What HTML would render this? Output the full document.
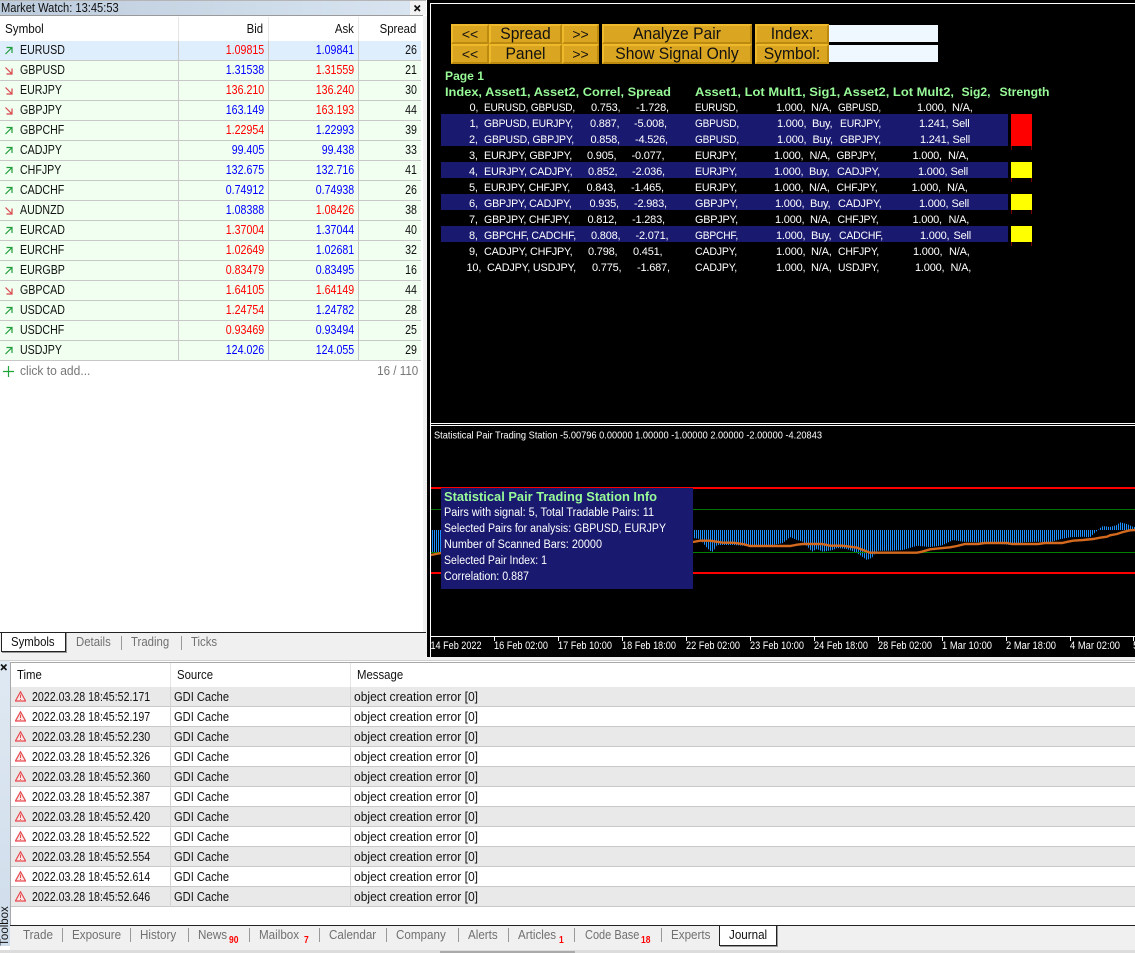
<!DOCTYPE html>
<html><head><meta charset="utf-8"><style>
html,body{margin:0;padding:0;background:#fff;width:1135px;height:953px;overflow:hidden}
body{position:relative;font-family:"Liberation Sans",sans-serif;font-size:12.5px;color:#111}
.a{position:absolute}
.t{position:absolute;white-space:nowrap;line-height:16px;transform:scaleX(.85);transform-origin:0 50%}
.tr{position:absolute;white-space:nowrap;line-height:16px;transform:scaleX(.85);transform-origin:100% 50%;text-align:right}
.hd{transform:scaleX(.91)}
.gd{transform:scaleX(.89)}
.ms{transform:scaleX(.965)}
.row{position:absolute;left:0;width:421px;height:19px;background:#f0fff0;border-bottom:1px solid #c8c8c8}
.row .t,.row .tr{top:1px}
.row i{position:absolute;top:0;width:1px;height:20px;background:#c8c8c8}
.ar{position:absolute;left:4px;top:5px}
.s{left:20px}.b{right:157px}.k{right:67px}.p{right:4px}
.R{color:#f00}.B{color:#00f}
.jr{position:absolute;left:11px;width:1124px;height:19px;border-bottom:1px solid #c8c8c8}
.jr .t{top:2px}
.jr i{position:absolute;top:0;width:1px;height:20px;background:#d4d4d4}
.g{background:#e9e9e9}
.btn{position:absolute;box-sizing:border-box;height:20px;background:#daa520;border:2px solid;border-color:#efb92c #bd8a10 #bd8a10 #efb92c;text-align:center;font-size:17px;line-height:16px;color:#111;white-space:nowrap}
.btn span{display:block;transform:scaleX(.92)}
.sm{font-size:14px;line-height:16px}
.sm span{transform:none}
.tab{position:absolute;top:927px;color:#707070;white-space:nowrap;line-height:16px;transform:scaleX(.93);transform-origin:0 50%}
.sep{position:absolute;top:928px;width:1px;height:14px;background:#999}
.n{position:absolute;top:935px;color:#f00;font-size:10px;font-weight:bold;line-height:12px;transform:scaleX(.85);transform-origin:0 50%}
.st{position:absolute;top:634px;color:#707070;line-height:16px;transform:scaleX(.91);transform-origin:0 50%}
svg text{font-family:"Liberation Sans",sans-serif}
</style></head><body>
<svg width="0" height="0" style="position:absolute"><defs>
<g id="up"><path d="M1.5 8L7.5 2M2.5 1.5H8V7" fill="none" stroke="#1f9e3a" stroke-width="1.2"/></g>
<g id="dn"><path d="M1.5 1.5L7.5 7.5M2.5 8H8V2.5" fill="none" stroke="#d9434a" stroke-width="1.2"/></g>
<g id="w"><path d="M5.5 .8L10.6 10H.4Z" fill="#fde4e4" stroke="#e64a4f" stroke-width="1.2"/><path d="M5.5 3.6V7M5.5 8V9" stroke="#e64a4f" stroke-width="1"/></g>
</defs></svg>

<!-- Market watch -->
<div class="a" style="left:0;top:0;width:426px;height:1px;background:#b5b5b5"></div>
<div class="a" style="left:0;top:1px;width:410px;height:14px;background:linear-gradient(90deg,#bccbdc,#d8e4f0)"></div>
<div class="a" style="left:410px;top:1px;width:16px;height:14px;background:#f2f2f2"></div>
<div class="a" style="left:0;top:15px;width:423px;height:1px;background:#9a9a9a"></div>
<div class="t" style="left:1px;top:0;transform:scaleX(.89)">Market Watch: 13:45:53</div>
<svg class="a" style="left:413px;top:4px" width="9" height="9"><path d="M1.5 1.5L7 7M7 1.5L1.5 7" stroke="#111" stroke-width="1.6"/></svg>
<div class="a" style="left:423px;top:16px;width:4px;height:640px;background:#f0f0f0"></div>
<div class="a" style="left:178px;top:17px;width:1px;height:24px;background:#e6e6e6"></div>
<div class="a" style="left:268px;top:17px;width:1px;height:24px;background:#e6e6e6"></div>
<div class="a" style="left:358px;top:17px;width:1px;height:24px;background:#e6e6e6"></div>
<div class="t hd" style="left:5px;top:21px;transform:scaleX(.93)">Symbol</div>
<div class="tr hd" style="right:872px;top:21px">Bid</div>
<div class="tr hd" style="right:781px;top:21px">Ask</div>
<div class="tr hd" style="right:719px;top:21px">Spread</div>

<div class="row" style="top:41px;background:#deeefc"><i style="left:178px"></i><i style="left:268px"></i><i style="left:358px"></i><svg class="ar" width="10" height="10"><use href="#up"/></svg><div class="t s">EURUSD</div><div class="tr b R">1.09815</div><div class="tr k B">1.09841</div><div class="tr p">26</div></div>
<div class="row" style="top:61px"><i style="left:178px"></i><i style="left:268px"></i><i style="left:358px"></i><svg class="ar" width="10" height="10"><use href="#dn"/></svg><div class="t s">GBPUSD</div><div class="tr b B">1.31538</div><div class="tr k R">1.31559</div><div class="tr p">21</div></div>
<div class="row" style="top:81px"><i style="left:178px"></i><i style="left:268px"></i><i style="left:358px"></i><svg class="ar" width="10" height="10"><use href="#dn"/></svg><div class="t s">EURJPY</div><div class="tr b R">136.210</div><div class="tr k R">136.240</div><div class="tr p">30</div></div>
<div class="row" style="top:101px"><i style="left:178px"></i><i style="left:268px"></i><i style="left:358px"></i><svg class="ar" width="10" height="10"><use href="#dn"/></svg><div class="t s">GBPJPY</div><div class="tr b B">163.149</div><div class="tr k R">163.193</div><div class="tr p">44</div></div>
<div class="row" style="top:121px"><i style="left:178px"></i><i style="left:268px"></i><i style="left:358px"></i><svg class="ar" width="10" height="10"><use href="#up"/></svg><div class="t s">GBPCHF</div><div class="tr b R">1.22954</div><div class="tr k B">1.22993</div><div class="tr p">39</div></div>
<div class="row" style="top:141px"><i style="left:178px"></i><i style="left:268px"></i><i style="left:358px"></i><svg class="ar" width="10" height="10"><use href="#up"/></svg><div class="t s">CADJPY</div><div class="tr b B">99.405</div><div class="tr k B">99.438</div><div class="tr p">33</div></div>
<div class="row" style="top:161px"><i style="left:178px"></i><i style="left:268px"></i><i style="left:358px"></i><svg class="ar" width="10" height="10"><use href="#up"/></svg><div class="t s">CHFJPY</div><div class="tr b B">132.675</div><div class="tr k B">132.716</div><div class="tr p">41</div></div>
<div class="row" style="top:181px"><i style="left:178px"></i><i style="left:268px"></i><i style="left:358px"></i><svg class="ar" width="10" height="10"><use href="#up"/></svg><div class="t s">CADCHF</div><div class="tr b B">0.74912</div><div class="tr k B">0.74938</div><div class="tr p">26</div></div>
<div class="row" style="top:201px"><i style="left:178px"></i><i style="left:268px"></i><i style="left:358px"></i><svg class="ar" width="10" height="10"><use href="#dn"/></svg><div class="t s">AUDNZD</div><div class="tr b B">1.08388</div><div class="tr k R">1.08426</div><div class="tr p">38</div></div>
<div class="row" style="top:221px"><i style="left:178px"></i><i style="left:268px"></i><i style="left:358px"></i><svg class="ar" width="10" height="10"><use href="#up"/></svg><div class="t s">EURCAD</div><div class="tr b R">1.37004</div><div class="tr k B">1.37044</div><div class="tr p">40</div></div>
<div class="row" style="top:241px"><i style="left:178px"></i><i style="left:268px"></i><i style="left:358px"></i><svg class="ar" width="10" height="10"><use href="#up"/></svg><div class="t s">EURCHF</div><div class="tr b R">1.02649</div><div class="tr k B">1.02681</div><div class="tr p">32</div></div>
<div class="row" style="top:261px"><i style="left:178px"></i><i style="left:268px"></i><i style="left:358px"></i><svg class="ar" width="10" height="10"><use href="#up"/></svg><div class="t s">EURGBP</div><div class="tr b R">0.83479</div><div class="tr k B">0.83495</div><div class="tr p">16</div></div>
<div class="row" style="top:281px"><i style="left:178px"></i><i style="left:268px"></i><i style="left:358px"></i><svg class="ar" width="10" height="10"><use href="#dn"/></svg><div class="t s">GBPCAD</div><div class="tr b R">1.64105</div><div class="tr k R">1.64149</div><div class="tr p">44</div></div>
<div class="row" style="top:301px"><i style="left:178px"></i><i style="left:268px"></i><i style="left:358px"></i><svg class="ar" width="10" height="10"><use href="#up"/></svg><div class="t s">USDCAD</div><div class="tr b R">1.24754</div><div class="tr k B">1.24782</div><div class="tr p">28</div></div>
<div class="row" style="top:321px"><i style="left:178px"></i><i style="left:268px"></i><i style="left:358px"></i><svg class="ar" width="10" height="10"><use href="#up"/></svg><div class="t s">USDCHF</div><div class="tr b R">0.93469</div><div class="tr k B">0.93494</div><div class="tr p">25</div></div>
<div class="row" style="top:341px"><i style="left:178px"></i><i style="left:268px"></i><i style="left:358px"></i><svg class="ar" width="10" height="10"><use href="#up"/></svg><div class="t s">USDJPY</div><div class="tr b B">124.026</div><div class="tr k B">124.055</div><div class="tr p">29</div></div>

<svg class="a" style="left:3px;top:365px" width="12" height="12"><path d="M5.5 1V12M0 6.5H11" stroke="#1fa53a" stroke-width="1.2"/></svg>
<div class="t ms" style="left:20px;top:363px;color:#777">click to add...</div>
<div class="tr" style="right:717px;top:363px;color:#777;transform:scaleX(.93)">16 / 110</div>

<!-- left tabs -->
<div class="a" style="left:0;top:632px;width:426px;height:26px;background:#f0f0f0"></div>
<div class="a" style="left:0;top:632px;width:426px;height:1px;background:#222"></div>
<div class="a" style="left:1px;top:632px;width:63px;height:18px;background:#fff;border:1px solid #222;box-shadow:1px 1px 0 #999"></div>
<div class="st" style="left:11px;color:#111">Symbols</div>
<div class="st" style="left:76px">Details</div><div class="sep" style="left:121px;top:636px"></div>
<div class="st" style="left:131px">Trading</div><div class="sep" style="left:181px;top:636px"></div>
<div class="st" style="left:191px">Ticks</div>

<!-- charts -->
<div class="a" style="left:427px;top:0;width:708px;height:657px;background:#000"></div>
<svg class="a" style="left:0;top:0" width="1135" height="953">
<defs><pattern id="st" x="0" y="0" width="2" height="10" patternUnits="userSpaceOnUse"><rect width="1" height="10" fill="#1e90ff"/></pattern></defs>
<path d="M430.5 657V3.5H1135M430.5 423.5H1135M430.5 425.5H1135M430.5 636.5H1135" fill="none" stroke="#fff" stroke-width="1"/>
<rect x="441" y="114" width="567" height="32" fill="#191970"/>
<rect x="441" y="162" width="567" height="16" fill="#191970"/>
<rect x="441" y="194" width="567" height="16" fill="#191970"/>
<rect x="441" y="226" width="567" height="16" fill="#191970"/>
<rect x="1011" y="114" width="21" height="32" fill="#f00"/>
<rect x="1011" y="162" width="21" height="16" fill="#ff0"/>
<rect x="1011" y="194" width="21" height="16" fill="#ff0"/>
<rect x="1011" y="226" width="21" height="16" fill="#ff0"/>
<path d="M1011.5 146v4M1031.5 146v4M1011.5 178v4M1031.5 178v4M1011.5 210v4M1031.5 210v4M1011.5 242v4M1031.5 242v4" stroke="#700" stroke-width="1"/>

<g fill="#98fb98" font-size="12" font-weight="bold">
<text x="445" y="80" textLength="39" lengthAdjust="spacingAndGlyphs">Page 1</text>
<text x="445" y="96" textLength="226" lengthAdjust="spacingAndGlyphs">Index, Asset1, Asset2, Correl, Spread</text>
<text x="695" y="96" textLength="259" lengthAdjust="spacingAndGlyphs">Asset1, Lot Mult1, Sig1, Asset2, Lot Mult2,</text>
<text x="961.5" y="96" textLength="29" lengthAdjust="spacingAndGlyphs">Sig2,</text>
<text x="999.5" y="96" textLength="50" lengthAdjust="spacingAndGlyphs">Strength</text>
</g>
<g fill="#fff" font-size="11" letter-spacing="-.2">
<text x="469.5" y="111">0,</text><text x="484" y="111" textLength="91" lengthAdjust="spacingAndGlyphs">EURUSD, GBPUSD,</text><text x="591" y="111">0.753,</text><text x="636" y="111">-1.728,</text><text x="695" y="111" textLength="43" lengthAdjust="spacingAndGlyphs">EURUSD,</text><text x="776" y="111">1.000,</text><text x="811" y="111">N/A,</text><text x="838" y="111" textLength="43" lengthAdjust="spacingAndGlyphs">GBPUSD,</text><text x="917" y="111">1.000,</text><text x="952" y="111">N/A,</text>
<text x="469.5" y="127">1,</text><text x="484" y="127" textLength="89" lengthAdjust="spacingAndGlyphs">GBPUSD, EURJPY,</text><text x="590" y="127">0.887,</text><text x="634" y="127">-5.008,</text><text x="695" y="127" textLength="44" lengthAdjust="spacingAndGlyphs">GBPUSD,</text><text x="777" y="127">1.000,</text><text x="812" y="127">Buy,</text><text x="840" y="127" textLength="41" lengthAdjust="spacingAndGlyphs">EURJPY,</text><text x="919" y="127">1.241,</text><text x="952" y="127">Sell</text>
<text x="469" y="143">2,</text><text x="484" y="143" textLength="90" lengthAdjust="spacingAndGlyphs">GBPUSD, GBPJPY,</text><text x="590.5" y="143">0.858,</text><text x="635" y="143">-4.526,</text><text x="695" y="143" textLength="44" lengthAdjust="spacingAndGlyphs">GBPUSD,</text><text x="777" y="143">1.000,</text><text x="812.5" y="143">Buy,</text><text x="840" y="143" textLength="41" lengthAdjust="spacingAndGlyphs">GBPJPY,</text><text x="920" y="143">1.241,</text><text x="952.5" y="143">Sell</text>
<text x="469" y="159">3,</text><text x="484" y="159" textLength="88" lengthAdjust="spacingAndGlyphs">EURJPY, GBPJPY,</text><text x="587" y="159">0.905,</text><text x="631.5" y="159">-0.077,</text><text x="695" y="159" textLength="42" lengthAdjust="spacingAndGlyphs">EURJPY,</text><text x="774" y="159">1.000,</text><text x="809.5" y="159">N/A,</text><text x="836.5" y="159" textLength="40" lengthAdjust="spacingAndGlyphs">GBPJPY,</text><text x="912.5" y="159">1.000,</text><text x="948" y="159">N/A,</text>
<text x="469" y="175">4,</text><text x="484" y="175" textLength="88.5" lengthAdjust="spacingAndGlyphs">EURJPY, CADJPY,</text><text x="588" y="175">0.852,</text><text x="632" y="175">-2.036,</text><text x="695" y="175" textLength="42" lengthAdjust="spacingAndGlyphs">EURJPY,</text><text x="774" y="175">1.000,</text><text x="809" y="175">Buy,</text><text x="837" y="175" textLength="43" lengthAdjust="spacingAndGlyphs">CADJPY,</text><text x="918" y="175">1.000,</text><text x="950.5" y="175">Sell</text>
<text x="469" y="191">5,</text><text x="484" y="191" textLength="86" lengthAdjust="spacingAndGlyphs">EURJPY, CHFJPY,</text><text x="586.5" y="191">0.843,</text><text x="631" y="191">-1.465,</text><text x="695" y="191" textLength="42" lengthAdjust="spacingAndGlyphs">EURJPY,</text><text x="774" y="191">1.000,</text><text x="809" y="191">N/A,</text><text x="836.5" y="191" textLength="41" lengthAdjust="spacingAndGlyphs">CHFJPY,</text><text x="911.5" y="191">1.000,</text><text x="947" y="191">N/A,</text>
<text x="469" y="207">6,</text><text x="484" y="207" textLength="87.5" lengthAdjust="spacingAndGlyphs">GBPJPY, CADJPY,</text><text x="589.5" y="207">0.935,</text><text x="634" y="207">-2.983,</text><text x="695" y="207" textLength="43" lengthAdjust="spacingAndGlyphs">GBPJPY,</text><text x="775" y="207">1.000,</text><text x="810" y="207">Buy,</text><text x="838" y="207" textLength="43.5" lengthAdjust="spacingAndGlyphs">CADJPY,</text><text x="919" y="207">1.000,</text><text x="951.5" y="207">Sell</text>
<text x="469" y="223">7,</text><text x="484" y="223" textLength="86.5" lengthAdjust="spacingAndGlyphs">GBPJPY, CHFJPY,</text><text x="587.5" y="223">0.812,</text><text x="632" y="223">-1.283,</text><text x="695" y="223" textLength="43" lengthAdjust="spacingAndGlyphs">GBPJPY,</text><text x="775" y="223">1.000,</text><text x="810" y="223">N/A,</text><text x="837.5" y="223" textLength="41" lengthAdjust="spacingAndGlyphs">CHFJPY,</text><text x="912.5" y="223">1.000,</text><text x="948.5" y="223">N/A,</text>
<text x="469" y="239">8,</text><text x="484" y="239" textLength="92" lengthAdjust="spacingAndGlyphs">GBPCHF, CADCHF,</text><text x="591" y="239">0.808,</text><text x="635.5" y="239">-2.071,</text><text x="695" y="239" textLength="43" lengthAdjust="spacingAndGlyphs">GBPCHF,</text><text x="776" y="239">1.000,</text><text x="811" y="239">Buy,</text><text x="839" y="239" textLength="44" lengthAdjust="spacingAndGlyphs">CADCHF,</text><text x="920" y="239">1.000,</text><text x="953.5" y="239">Sell</text>
<text x="469" y="255">9,</text><text x="484" y="255" textLength="88.5" lengthAdjust="spacingAndGlyphs">CADJPY, CHFJPY,</text><text x="588" y="255">0.798,</text><text x="633" y="255">0.451,</text><text x="695" y="255" textLength="42" lengthAdjust="spacingAndGlyphs">CADJPY,</text><text x="776" y="255">1.000,</text><text x="811" y="255">N/A,</text><text x="838" y="255" textLength="41" lengthAdjust="spacingAndGlyphs">CHFJPY,</text><text x="913" y="255">1.000,</text><text x="949" y="255">N/A,</text>
<text x="466.5" y="271">10,</text><text x="487" y="271" textLength="89" lengthAdjust="spacingAndGlyphs">CADJPY, USDJPY,</text><text x="592" y="271">0.775,</text><text x="637" y="271">-1.687,</text><text x="695" y="271" textLength="42" lengthAdjust="spacingAndGlyphs">CADJPY,</text><text x="776" y="271">1.000,</text><text x="811" y="271">N/A,</text><text x="838" y="271" textLength="41" lengthAdjust="spacingAndGlyphs">USDJPY,</text><text x="915" y="271">1.000,</text><text x="950.5" y="271">N/A,</text>
</g>

<!-- indicator -->
<text x="434" y="438.5" fill="#fff" font-size="10.5" textLength="388" lengthAdjust="spacingAndGlyphs">Statistical Pair Trading Station -5.00796 0.00000 1.00000 -1.00000 2.00000 -2.00000 -4.20843</text>
<rect x="431" y="530" width="10" height="23" fill="url(#st)"/>
<polygon fill="url(#st)" points="693,530 693,538 700,539 703,543 707,547.7 710,550.7 713,551.7 717,545 733,545 747,546 763,547 783,543 790,537 797,540 803,541.7 812,551.7 817,549 823,551.7 833,550 837,548 847,549 857,553 867,560 872,557.7 877,550.7 890,550.7 903,550 917,545.7 930,547 940,545.7 943,545 953,540 963,541.7 977,542.3 990,543 1010,545 1023,542.3 1037,541.7 1050,542.3 1060,539.3 1070,537.3 1083,536.7 1090,537.3 1095,532.7 1098,530 1100,528 1103,526 1110,527 1117,525 1120,522.3 1127,524 1133,526.7 1135,527 1135,530"/>
<rect x="431" y="509" width="704" height="1" fill="#007000"/>
<rect x="431" y="552" width="704" height="1" fill="#008000"/>
<rect x="431" y="487" width="704" height="2" fill="#f00"/>
<rect x="431" y="572" width="704" height="2" fill="#f00"/>
<polyline fill="none" stroke="#d2691e" stroke-width="2.4" points="431,555 441,553"/>
<polyline fill="none" stroke="#d2691e" stroke-width="2.4" points="693,542 700,540.7 710,540.7 723,542.7 733,542.7 743,544 750,546 790,546 797,544.7 803,544 822,544 830,545.7 842,545.7 850,546.7 857,547.7 863,550 870,552.7 917,552.7 922,551.7 930,549.3 940,548.3 950,547.3 957,546 965,544 978,544 985,543 1007,543 1012,544 1038,544 1045,543 1062,543 1068,541.7 1073,540.7 1083,540 1093,539 1100,537.7 1107,536.7 1110,535.3 1117,534 1123,532 1130,530.3 1135,530"/>
<rect x="441" y="488" width="252" height="101" fill="#191970"/>
<text x="444" y="501" fill="#98fb98" font-size="12.5" font-weight="bold" textLength="213" lengthAdjust="spacingAndGlyphs">Statistical Pair Trading Station Info</text>
<g fill="#fff" font-size="11.5">
<text x="444" y="516" textLength="210" lengthAdjust="spacingAndGlyphs">Pairs with signal: 5, Total Tradable Pairs: 11</text>
<text x="444" y="532" textLength="222" lengthAdjust="spacingAndGlyphs">Selected Pairs for analysis: GBPUSD, EURJPY</text>
<text x="444" y="548" textLength="158" lengthAdjust="spacingAndGlyphs">Number of Scanned Bars: 20000</text>
<text x="444" y="564" textLength="103" lengthAdjust="spacingAndGlyphs">Selected Pair Index: 1</text>
<text x="444" y="580" textLength="85" lengthAdjust="spacingAndGlyphs">Correlation: 0.887</text>
</g>
<path d="M494.5 637v4M558.5 637v4M622.5 637v4M686.5 637v4M750.5 637v4M814.5 637v4M878.5 637v4M942.5 637v4M1006.5 637v4M1070.5 637v4M1133.5 637v4" stroke="#fff"/>
<g fill="#fff" font-size="11">
<text x="430.5" y="649" textLength="51" lengthAdjust="spacingAndGlyphs">14 Feb 2022</text>
<text x="494" y="649" textLength="54" lengthAdjust="spacingAndGlyphs">16 Feb 02:00</text>
<text x="558" y="649" textLength="54" lengthAdjust="spacingAndGlyphs">17 Feb 10:00</text>
<text x="622" y="649" textLength="54" lengthAdjust="spacingAndGlyphs">18 Feb 18:00</text>
<text x="686" y="649" textLength="54" lengthAdjust="spacingAndGlyphs">22 Feb 02:00</text>
<text x="750" y="649" textLength="54" lengthAdjust="spacingAndGlyphs">23 Feb 10:00</text>
<text x="814" y="649" textLength="54" lengthAdjust="spacingAndGlyphs">24 Feb 18:00</text>
<text x="878" y="649" textLength="54" lengthAdjust="spacingAndGlyphs">28 Feb 02:00</text>
<text x="942" y="649" textLength="50" lengthAdjust="spacingAndGlyphs">1 Mar 10:00</text>
<text x="1006" y="649" textLength="50" lengthAdjust="spacingAndGlyphs">2 Mar 18:00</text>
<text x="1070" y="649" textLength="50" lengthAdjust="spacingAndGlyphs">4 Mar 02:00</text>
<text x="1133" y="649">5</text>
</g>
</svg>

<!-- panel buttons -->
<div class="btn sm" style="left:451px;top:24px;width:38px"><span>&lt;&lt;</span></div>
<div class="btn" style="left:489px;top:24px;width:73px"><span>Spread</span></div>
<div class="btn sm" style="left:562px;top:24px;width:37px"><span>&gt;&gt;</span></div>
<div class="btn" style="left:602px;top:24px;width:150px"><span>Analyze Pair</span></div>
<div class="btn" style="left:755px;top:24px;width:74px"><span>Index:</span></div>
<div class="a" style="left:829px;top:25px;width:109px;height:17px;background:#f0f8ff"></div>
<div class="btn sm" style="left:451px;top:44px;width:38px"><span>&lt;&lt;</span></div>
<div class="btn" style="left:489px;top:44px;width:73px"><span>Panel</span></div>
<div class="btn sm" style="left:562px;top:44px;width:37px"><span>&gt;&gt;</span></div>
<div class="btn" style="left:602px;top:44px;width:150px"><span>Show Signal Only</span></div>
<div class="btn" style="left:755px;top:44px;width:74px"><span>Symbol:</span></div>
<div class="a" style="left:829px;top:45px;width:109px;height:17px;background:#f0f8ff"></div>

<!-- bottom -->
<div class="a" style="left:0;top:657px;width:1135px;height:3px;background:#f0f0f0"></div>
<div class="a" style="left:0;top:660px;width:1135px;height:1px;background:#d0d0d0"></div>
<div class="a" style="left:0;top:661px;width:10px;height:285px;background:linear-gradient(180deg,#dfe9f3,#cfdcea)"></div>
<div class="a" style="left:10px;top:662px;width:1125px;height:1px;background:#a8a8a8"></div>
<div class="a" style="left:10px;top:662px;width:1px;height:263px;background:#a8a8a8"></div>
<svg class="a" style="left:0;top:663px" width="9" height="9"><path d="M1 1.5L6.5 7M6.5 1.5L1 7" stroke="#111" stroke-width="1.6"/></svg>
<div class="a" style="left:170px;top:663px;width:1px;height:24px;background:#e6e6e6"></div>
<div class="a" style="left:350px;top:663px;width:1px;height:24px;background:#e6e6e6"></div>
<div class="t hd" style="left:17px;top:667px">Time</div>
<div class="t hd" style="left:177px;top:667px">Source</div>
<div class="t hd" style="left:357px;top:667px">Message</div>

<div class="jr g" style="top:687px"><i style="left:159px"></i><i style="left:339px"></i><svg class="a" style="left:4px;top:4px" width="11" height="11"><use href="#w"/></svg><div class="t" style="left:21px">2022.03.28 18:45:52.171</div><div class="t gd" style="left:163px">GDI Cache</div><div class="t ms" style="left:343px">object creation error [0]</div></div>
<div class="jr" style="top:707px"><i style="left:159px"></i><i style="left:339px"></i><svg class="a" style="left:4px;top:4px" width="11" height="11"><use href="#w"/></svg><div class="t" style="left:21px">2022.03.28 18:45:52.197</div><div class="t gd" style="left:163px">GDI Cache</div><div class="t ms" style="left:343px">object creation error [0]</div></div>
<div class="jr g" style="top:727px"><i style="left:159px"></i><i style="left:339px"></i><svg class="a" style="left:4px;top:4px" width="11" height="11"><use href="#w"/></svg><div class="t" style="left:21px">2022.03.28 18:45:52.230</div><div class="t gd" style="left:163px">GDI Cache</div><div class="t ms" style="left:343px">object creation error [0]</div></div>
<div class="jr" style="top:747px"><i style="left:159px"></i><i style="left:339px"></i><svg class="a" style="left:4px;top:4px" width="11" height="11"><use href="#w"/></svg><div class="t" style="left:21px">2022.03.28 18:45:52.326</div><div class="t gd" style="left:163px">GDI Cache</div><div class="t ms" style="left:343px">object creation error [0]</div></div>
<div class="jr g" style="top:767px"><i style="left:159px"></i><i style="left:339px"></i><svg class="a" style="left:4px;top:4px" width="11" height="11"><use href="#w"/></svg><div class="t" style="left:21px">2022.03.28 18:45:52.360</div><div class="t gd" style="left:163px">GDI Cache</div><div class="t ms" style="left:343px">object creation error [0]</div></div>
<div class="jr" style="top:787px"><i style="left:159px"></i><i style="left:339px"></i><svg class="a" style="left:4px;top:4px" width="11" height="11"><use href="#w"/></svg><div class="t" style="left:21px">2022.03.28 18:45:52.387</div><div class="t gd" style="left:163px">GDI Cache</div><div class="t ms" style="left:343px">object creation error [0]</div></div>
<div class="jr g" style="top:807px"><i style="left:159px"></i><i style="left:339px"></i><svg class="a" style="left:4px;top:4px" width="11" height="11"><use href="#w"/></svg><div class="t" style="left:21px">2022.03.28 18:45:52.420</div><div class="t gd" style="left:163px">GDI Cache</div><div class="t ms" style="left:343px">object creation error [0]</div></div>
<div class="jr" style="top:827px"><i style="left:159px"></i><i style="left:339px"></i><svg class="a" style="left:4px;top:4px" width="11" height="11"><use href="#w"/></svg><div class="t" style="left:21px">2022.03.28 18:45:52.522</div><div class="t gd" style="left:163px">GDI Cache</div><div class="t ms" style="left:343px">object creation error [0]</div></div>
<div class="jr g" style="top:847px"><i style="left:159px"></i><i style="left:339px"></i><svg class="a" style="left:4px;top:4px" width="11" height="11"><use href="#w"/></svg><div class="t" style="left:21px">2022.03.28 18:45:52.554</div><div class="t gd" style="left:163px">GDI Cache</div><div class="t ms" style="left:343px">object creation error [0]</div></div>
<div class="jr" style="top:867px"><i style="left:159px"></i><i style="left:339px"></i><svg class="a" style="left:4px;top:4px" width="11" height="11"><use href="#w"/></svg><div class="t" style="left:21px">2022.03.28 18:45:52.614</div><div class="t gd" style="left:163px">GDI Cache</div><div class="t ms" style="left:343px">object creation error [0]</div></div>
<div class="jr g" style="top:887px"><i style="left:159px"></i><i style="left:339px"></i><svg class="a" style="left:4px;top:4px" width="11" height="11"><use href="#w"/></svg><div class="t" style="left:21px">2022.03.28 18:45:52.646</div><div class="t gd" style="left:163px">GDI Cache</div><div class="t ms" style="left:343px">object creation error [0]</div></div>

<!-- bottom tabs -->
<div class="a" style="left:10px;top:926px;width:1125px;height:24px;background:#f0f0f0"></div>
<div class="a" style="left:10px;top:925px;width:1125px;height:1px;background:#222"></div>
<div class="a" style="left:0;top:950px;width:1135px;height:3px;background:#dcdcdc"></div>
<div class="a" style="left:440px;top:951px;width:135px;height:2px;background:#aaa"></div>
<div class="a" style="left:719px;top:925px;width:56px;height:19px;background:#fff;border:1px solid #222;box-shadow:1px 1px 0 #999"></div>
<div class="tab" style="left:23px">Trade</div><div class="sep" style="left:62px"></div>
<div class="tab" style="left:72px">Exposure</div><div class="sep" style="left:130px"></div>
<div class="tab" style="left:140px">History</div><div class="sep" style="left:188px"></div>
<div class="tab" style="left:198px">News</div><div class="n" style="left:229px">90</div><div class="sep" style="left:249px"></div>
<div class="tab" style="left:259px">Mailbox</div><div class="n" style="left:304px">7</div><div class="sep" style="left:319px"></div>
<div class="tab" style="left:329px">Calendar</div><div class="sep" style="left:386px"></div>
<div class="tab" style="left:396px">Company</div><div class="sep" style="left:458px"></div>
<div class="tab" style="left:468px">Alerts</div><div class="sep" style="left:508px"></div>
<div class="tab" style="left:518px">Articles</div><div class="n" style="left:559px">1</div><div class="sep" style="left:574px"></div>
<div class="tab" style="left:585px;transform:scaleX(.88)">Code Base</div><div class="n" style="left:641px">18</div><div class="sep" style="left:661px"></div>
<div class="tab" style="left:671px">Experts</div>
<div class="tab" style="left:729px;color:#111">Journal</div>
<div class="a" style="left:-15px;top:919px;width:40px;height:14px;font-size:11.5px;line-height:14px;transform:rotate(-90deg);text-align:center;color:#111">Toolbox</div>
</body></html>
